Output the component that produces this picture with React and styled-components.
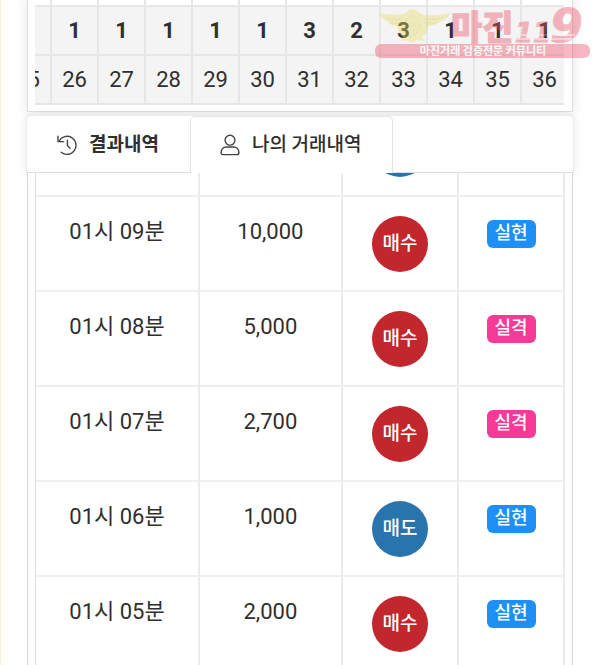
import React, { useLayoutEffect, useRef } from 'react';
import styled, { createGlobalStyle, ThemeProvider } from 'styled-components';

const theme = {
  text: '#2f2f2f',
  border: '#e6e6e6',
  cell: '#f4f4f4',
  buy: '#c1272d',
  sell: '#2a74ae',
  win: '#1e90f5',
  lose: '#f73a98',
};

const GlobalStyle = createGlobalStyle`
  * {
    box-sizing: border-box;
  }

  body {
    margin: 0;
    background: #fefefe;
    font-family: Roboto, 'Noto Sans CJK KR', sans-serif;
  }
`;

const Page = styled.main`
  display: flex;
  flex-direction: column;
  height: 100vh;
  padding: 0 27px 0 26px;
  overflow: hidden;
  color: ${(props) => props.theme.text};
  border-left: 1px solid #f3f3e2;
  background: linear-gradient(to right, #fffff0, #fefefe 8px);
`;

const RoundPanel = styled.section`
  flex-shrink: 0;
  padding: 0 8px 6px 7px;
  border: 1px solid #dedede;
  border-top: 0;
  background: #fff;
  box-shadow: 0 0 10px rgba(0, 0, 0, 0.1);
`;

const RoundScroller = styled.div`
  overflow: hidden;
`;

const RoundTable = styled.table`
  table-layout: fixed;
  width: 564px;
  border-collapse: separate;
  border-spacing: 0;
  text-align: center;
`;

const RoundCell = styled.td`
  height: ${(props) => (props.$blank ? '7px' : '49px')};
  padding: 0;
  border-right: 2px solid ${(props) => props.theme.border};
  border-bottom: 2px solid ${(props) => props.theme.border};
  background: ${(props) => (props.$blank ? '#fff' : props.theme.cell)};
  font-size: 22px;
  font-weight: ${(props) => (props.$bold ? 700 : 400)};
  line-height: 24px;
`;

const TabList = styled.nav`
  display: flex;
  flex-shrink: 0;
  height: 58px;
  margin: 3px -1px 0;
  border: 1px solid #ececec;
  border-bottom: 1px solid #dedede;
  border-radius: 5px 5px 0 0;
  background: #fefefe;
  box-shadow: 0 0 8px rgba(0, 0, 0, 0.08);
`;

const Tab = styled.button`
  display: flex;
  align-items: center;
  gap: 12px;
  margin-bottom: -1px;
  padding: 0 30px 0 29px;
  border: 1px solid ${(props) => (props.$active ? '#e4e4e4' : 'transparent')};
  border-bottom: 0;
  border-radius: 5px 5px 0 0;
  background: ${(props) => (props.$active ? '#fff' : 'transparent')};
  color: inherit;
  font-family: inherit;
  font-size: 19px;
  font-weight: ${(props) => (props.$active ? 500 : 700)};
  line-height: 30px;
  white-space: nowrap;
`;

const TabIcon = styled.svg`
  flex-shrink: 0;
  width: 20px;
  height: 22px;
  fill: none;
  stroke: #444;
  stroke-width: 1.4;
  stroke-linecap: round;
  stroke-linejoin: round;
`;

const TradePanel = styled.section`
  flex: 1;
  min-height: 0;
  padding: 0 7px;
  overflow: hidden;
  border: 1px solid #d6d6d6;
  border-width: 0 1px;
  background: #fff;
`;

const TradeScroller = styled.div`
  height: 100%;
  overflow-y: auto;
  scrollbar-width: none;
`;

const TradeTable = styled.table`
  table-layout: fixed;
  width: 100%;
  border-collapse: separate;
  border-spacing: 0;
  border-left: 1px solid #dedede;
  text-align: center;
`;

const TradeCell = styled.td`
  width: ${(props) => props.$width};
  height: 95px;
  padding: 19px 0 0;
  border-right: 2px solid #ebebeb;
  border-bottom: 2px solid #efefef;
  vertical-align: top;
  font-size: 22px;
  line-height: 32px;
`;

const Side = styled.span`
  display: flex;
  align-items: center;
  justify-content: center;
  width: 56px;
  height: 56px;
  margin: 0 auto;
  border-radius: 50%;
  background: ${(props) => (props.$buy ? props.theme.buy : props.theme.sell)};
  color: #fff;
  font-size: 19px;
  font-weight: 500;
`;

const Result = styled.span`
  display: block;
  width: 49px;
  height: 28px;
  margin: 4px auto 0;
  border-radius: 6px;
  background: ${(props) => (props.$win ? props.theme.win : props.theme.lose)};
  color: #fff;
  font-size: 18px;
  font-weight: 500;
  line-height: 26px;
`;

const Watermark = styled.svg`
  position: absolute;
  top: 6px;
  right: 9px;
  width: 216px;
  height: 54px;
  opacity: 0.4;
  pointer-events: none;
  font-family: 'Noto Sans CJK KR', sans-serif;
`;

const rounds = [
  { no: 25, count: '' },
  { no: 26, count: 1 },
  { no: 27, count: 1 },
  { no: 28, count: 1 },
  { no: 29, count: 1 },
  { no: 30, count: 1 },
  { no: 31, count: 3 },
  { no: 32, count: 2 },
  { no: 33, count: 3 },
  { no: 34, count: 1 },
  { no: 35, count: 1 },
  { no: 36, count: 1 },
];

const trades = [
  { time: '01시 10분', amount: '1,000', side: '매도', result: '실현' },
  { time: '01시 09분', amount: '10,000', side: '매수', result: '실현' },
  { time: '01시 08분', amount: '5,000', side: '매수', result: '실격' },
  { time: '01시 07분', amount: '2,700', side: '매수', result: '실격' },
  { time: '01시 06분', amount: '1,000', side: '매도', result: '실현' },
  { time: '01시 05분', amount: '2,000', side: '매수', result: '실현' },
];

const HistoryIcon = () => (
  <TabIcon viewBox="0 0 20 22" aria-hidden="true">
    <path d="M2 7.2A9 9 0 1 1 4.2 18.2" />
    <path d="M1 2.2v5.4h5.6" />
    <path d="M10.4 6.2v5.4l2.6 2.6" />
  </TabIcon>
);

const PersonIcon = () => (
  <TabIcon viewBox="0 0 20 22" aria-hidden="true">
    <circle cx="10" cy="6.2" r="4.9" />
    <path d="M3 20.6c-1.3 0-1.9-.7-1.9-1.9 0-3.4 2.2-5.7 5.3-5.7h7.2c3.1 0 5.3 2.3 5.3 5.7 0 1.2-.6 1.9-1.9 1.9z" />
  </TabIcon>
);

const BrandMark = () => (
  <Watermark viewBox="0 0 216 54">
    <path
      fill="#e8dd62"
      d="M4 7c9 2 17 2 25 1l5-4 5-1 5 3 4 3c9 1 17 0 27-2-2 5-6 8-11 9-3 3-6 4-11 4-1 5-2 9-6 11l3 4-8-1-5 3-5-3-7 1 3-4c-4-3-5-7-6-11-5 0-8-2-9-5-5-1-8-4-9-8z"
    />
    <g fill="none" stroke="#d2c657" strokeWidth="1">
      <path d="M10 11c7 3 12 3 17 2M15 16c5 2 9 1 12 0M68 11c-6 3-12 3-17 2M62 16c-4 2-8 1-11 0" />
      <path d="M31 14l5-4 6 3 3 7-4 8-6 3-6-5-1-7zM33 20h9M36 25l5-1" />
    </g>
    <text x="76" y="34" fill="#ee4f66" stroke="#ee4f66" strokeWidth="1" fontSize="34" fontWeight="900">
      마진
    </text>
    <g
      fill="#ee4f66"
      stroke="#ee4f66"
      strokeWidth="1"
      fontFamily="DejaVu Sans"
      fontStyle="italic"
      fontWeight="700"
    >
      <text x="140" y="36" fontSize="26">
        11
      </text>
      <text x="175" y="36" fontSize="47">
        9
      </text>
    </g>
    <path stroke="#f9f9f9" strokeWidth="1" d="M142 29h58M140 33h60" />
    <rect y="38" width="215" height="14" rx="6" fill="#ee4f66" />
    <text x="108" y="49" fill="#fff" fontSize="11" fontWeight="700" textAnchor="middle">
      마진거래 검증전문 커뮤니티
    </text>
  </Watermark>
);

const Rounds = () => {
  const scroller = useRef(null);

  useLayoutEffect(() => {
    scroller.current.scrollLeft = 30;
  }, []);

  return (
    <RoundPanel>
      <RoundScroller ref={scroller}>
        <RoundTable>
          <tbody>
            <tr>
              {rounds.map(({ no }) => (
                <RoundCell key={no} $blank />
              ))}
            </tr>
            <tr>
              {rounds.map(({ no, count }) => (
                <RoundCell key={no} $bold>
                  {count}
                </RoundCell>
              ))}
            </tr>
            <tr>
              {rounds.map(({ no }) => (
                <RoundCell key={no}>{no}</RoundCell>
              ))}
            </tr>
          </tbody>
        </RoundTable>
      </RoundScroller>
    </RoundPanel>
  );
};

const Trades = () => {
  const scroller = useRef(null);

  useLayoutEffect(() => {
    scroller.current.scrollTop = 71;
  }, []);

  return (
    <TradePanel>
      <TradeScroller ref={scroller}>
        <TradeTable>
          <tbody>
            {trades.map(({ time, amount, side, result }) => (
              <tr key={time}>
                <TradeCell $width="31%">{time}</TradeCell>
                <TradeCell $width="27%">{amount}</TradeCell>
                <TradeCell $width="22%">
                  <Side $buy={side === '매수'}>{side}</Side>
                </TradeCell>
                <TradeCell $width="20%">
                  <Result $win={result === '실현'}>{result}</Result>
                </TradeCell>
              </tr>
            ))}
          </tbody>
        </TradeTable>
      </TradeScroller>
    </TradePanel>
  );
};

const App = () => {
  return (
    <ThemeProvider theme={theme}>
      <GlobalStyle />
      <Page>
        <Rounds />
        <TabList>
          <Tab type="button">
            <HistoryIcon />
            결과내역
          </Tab>
          <Tab type="button" $active>
            <PersonIcon />
            나의 거래내역
          </Tab>
        </TabList>
        <Trades />
      </Page>
      <BrandMark />
    </ThemeProvider>
  );
};

export default App;
